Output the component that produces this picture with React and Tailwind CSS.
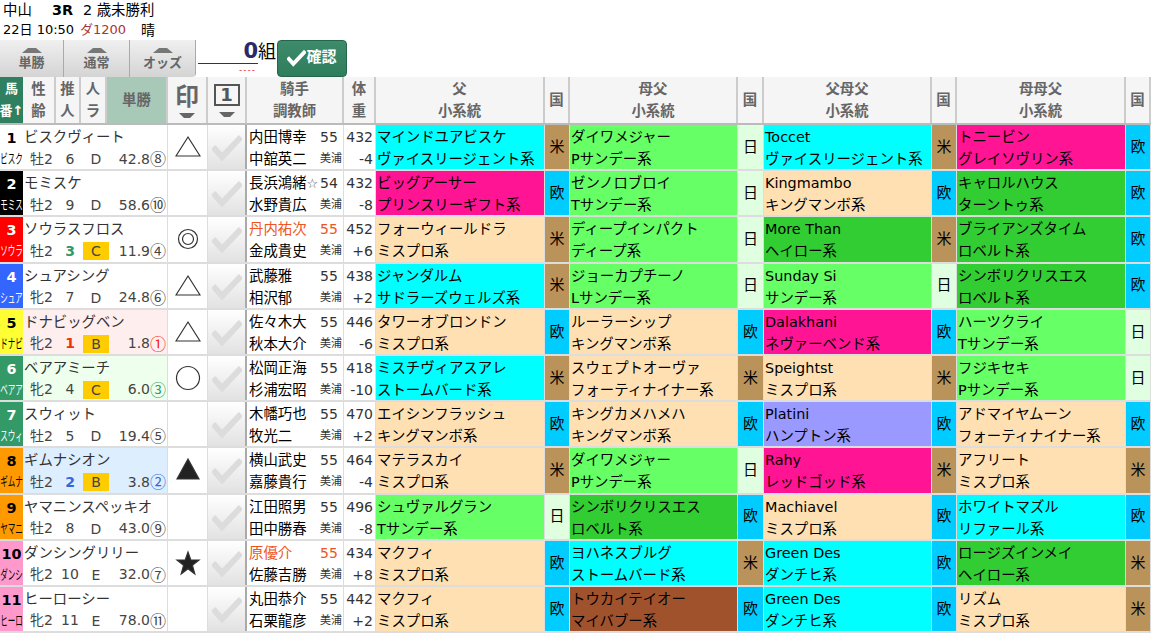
import React from "react";

const pedBg = {
  cyan: "bg-[#00ffff]",
  pink: "bg-[#ff1493]",
  green: "bg-[#66ff66]",
  dark: "bg-[#32cd32]",
  wheat: "bg-[#ffe0b2]",
  purple: "bg-[#9999ff]",
  brown: "bg-[#a0522d]",
};

const countryBg = {
  米: "bg-[#b99359]",
  欧: "bg-[#00ccff]",
  日: "bg-[#e0ffe0]",
};

const waku = {
  1: "bg-white text-black",
  2: "bg-black text-white",
  3: "bg-[#ff0000] text-white",
  4: "bg-[#3366ff] text-white",
  5: "bg-[#ffff33] text-black",
  6: "bg-[#339966] text-white",
  7: "bg-[#339966] text-white",
  8: "bg-[#ff9900] text-black",
  9: "bg-[#ff9900] text-black",
  10: "bg-[#ff99cc] text-black",
  11: "bg-[#ff99cc] text-black",
};

const rows = [
  { no: 1, name: "ビスクヴィート", short: "ビスク", sex: "牡2", pop: "6", rank: "D", odds: "42.8", ord: "⑧", mark: "tri", jockey: "内田博幸", kg: "55", trainer: "中舘英二", bw: "432", diff: "-4",
    ped: [["マインドユアビスケ", "ヴァイスリージェント系", "cyan", "米"], ["ダイワメジャー", "Pサンデー系", "green", "日"], ["Toccet", "ヴァイスリージェント系", "cyan", "米"], ["トニービン", "グレイソヴリン系", "pink", "欧"]] },
  { no: 2, name: "モミスケ", short: "モミス", sex: "牡2", pop: "9", rank: "D", odds: "58.6", ord: "⑩", jockey: "長浜鴻緒", star: true, kg: "54", trainer: "水野貴広", bw: "432", diff: "-8",
    ped: [["ビッグアーサー", "プリンスリーギフト系", "pink", "欧"], ["ゼンノロブロイ", "Tサンデー系", "green", "日"], ["Kingmambo", "キングマンボ系", "wheat", "欧"], ["キャロルハウス", "ターントゥ系", "dark", "欧"]] },
  { no: 3, name: "ソウラスフロス", short: "ソウラ", sex: "牡2", pop: "3", popCls: "font-bold text-[#339966]", rank: "C", odds: "11.9", ord: "④", mark: "double", jockey: "丹内祐次", hot: true, kg: "55", trainer: "金成貴史", bw: "452", diff: "+6",
    ped: [["フォーウィールドラ", "ミスプロ系", "wheat", "米"], ["ディープインパクト", "ディープ系", "green", "日"], ["More Than", "ヘイロー系", "dark", "米"], ["ブライアンズタイム", "ロベルト系", "dark", "欧"]] },
  { no: 4, name: "シュアシング", short: "シュア", sex: "牝2", pop: "7", rank: "D", odds: "24.8", ord: "⑥", mark: "tri", jockey: "武藤雅", kg: "55", trainer: "相沢郁", bw: "438", diff: "+2",
    ped: [["ジャンダルム", "サドラーズウェルズ系", "cyan", "米"], ["ジョーカプチーノ", "Lサンデー系", "green", "日"], ["Sunday Si", "サンデー系", "green", "日"], ["シンボリクリスエス", "ロベルト系", "dark", "欧"]] },
  { no: 5, name: "ドナビッグベン", short: "ドナビ", sex: "牝2", pop: "1", popCls: "font-bold text-[#ee3311]", rank: "B", odds: "1.8", ord: "①", ordCls: "text-[#ee2211]", rowBg: "bg-[#ffeeee]", mark: "tri", jockey: "佐々木大", kg: "55", trainer: "秋本大介", bw: "446", diff: "-6",
    ped: [["タワーオブロンドン", "ミスプロ系", "wheat", "欧"], ["ルーラーシップ", "キングマンボ系", "wheat", "欧"], ["Dalakhani", "ネヴァーベンド系", "pink", "欧"], ["ハーツクライ", "Tサンデー系", "green", "日"]] },
  { no: 6, name: "ベアアミーチ", short: "ベアア", sex: "牝2", pop: "4", rank: "C", odds: "6.0", ord: "③", ordCls: "text-[#339966]", rowBg: "bg-[#eeffee]", mark: "circle", jockey: "松岡正海", kg: "55", trainer: "杉浦宏昭", bw: "418", diff: "-10",
    ped: [["ミスチヴィアスアレ", "ストームバード系", "cyan", "米"], ["スウェプトオーヴァ", "フォーティナイナー系", "wheat", "米"], ["Speightst", "ミスプロ系", "wheat", "米"], ["フジキセキ", "Pサンデー系", "green", "日"]] },
  { no: 7, name: "スウィット", short: "スウィ", sex: "牡2", pop: "5", rank: "D", odds: "19.4", ord: "⑤", jockey: "木幡巧也", kg: "55", trainer: "牧光二", bw: "470", diff: "+2",
    ped: [["エイシンフラッシュ", "キングマンボ系", "wheat", "欧"], ["キングカメハメハ", "キングマンボ系", "wheat", "欧"], ["Platini", "ハンプトン系", "purple", "欧"], ["アドマイヤムーン", "フォーティナイナー系", "wheat", "欧"]] },
  { no: 8, name: "ギムナシオン", short: "ギムナ", sex: "牡2", pop: "2", popCls: "font-bold text-[#3366dd]", rank: "B", odds: "3.8", ord: "②", ordCls: "text-[#3366dd]", rowBg: "bg-[#ddeeff]", mark: "solid", jockey: "横山武史", kg: "55", trainer: "嘉藤貴行", bw: "464", diff: "-4",
    ped: [["マテラスカイ", "ミスプロ系", "wheat", "米"], ["ダイワメジャー", "Pサンデー系", "green", "日"], ["Rahy", "レッドゴッド系", "pink", "米"], ["アフリート", "ミスプロ系", "wheat", "米"]] },
  { no: 9, name: "ヤマニンスペッキオ", short: "ヤマニ", sex: "牡2", pop: "8", rank: "D", odds: "43.0", ord: "⑨", jockey: "江田照男", kg: "55", trainer: "田中勝春", bw: "496", diff: "-8",
    ped: [["シュヴァルグラン", "Tサンデー系", "green", "日"], ["シンボリクリスエス", "ロベルト系", "dark", "欧"], ["Machiavel", "ミスプロ系", "wheat", "欧"], ["ホワイトマズル", "リファール系", "cyan", "欧"]] },
  { no: 10, name: "ダンシングリリー", short: "ダンシ", sex: "牝2", pop: "10", rank: "E", odds: "32.0", ord: "⑦", mark: "star", jockey: "原優介", hot: true, kg: "55", trainer: "佐藤吉勝", bw: "434", diff: "+8",
    ped: [["マクフィ", "ミスプロ系", "wheat", "欧"], ["ヨハネスブルグ", "ストームバード系", "cyan", "米"], ["Green Des", "ダンチヒ系", "cyan", "欧"], ["ロージズインメイ", "ヘイロー系", "dark", "米"]] },
  { no: 11, name: "ヒーローシー", short: "ヒーロ", sex: "牝2", pop: "11", rank: "E", odds: "78.0", ord: "⑪", jockey: "丸田恭介", kg: "55", trainer: "石栗龍彦", bw: "442", diff: "+2",
    ped: [["マクフィ", "ミスプロ系", "wheat", "欧"], ["トウカイテイオー", "マイバブー系", "brown", "欧"], ["Green Des", "ダンチヒ系", "cyan", "欧"], ["リズム", "ミスプロ系", "wheat", "米"]] },
];

const Mark = ({ type }) => {
  if (!type) return null;
  return (
    <svg width="26" height="26" viewBox="0 0 26 26" fill="none" stroke="#333" strokeWidth="1.2">
      {type === "tri" && <polygon points="13,3 25,22 1,22" />}
      {type === "double" && (
        <>
          <circle cx="13" cy="13" r="9.5" />
          <circle cx="13" cy="13" r="5.5" />
        </>
      )}
      {type === "circle" && <circle cx="13" cy="13" r="11.5" />}
      {type === "solid" && <polygon points="13,2 24,22 2,22" fill="#222" />}
      {type === "star" && (
        <polygon points="13,2 15.8,10 24,10 17.4,15.2 19.8,24 13,18.8 6.2,24 8.6,15.2 2,10 10.2,10" fill="#222" />
      )}
    </svg>
  );
};

const SmallArrow = () => (
  <svg width="20" height="5" viewBox="0 0 20 5" className="block">
    <polygon points="6,0 14,0 20,5 0,5" fill="#777" />
  </svg>
);

const DownArrow = () => (
  <svg width="16" height="5" viewBox="0 0 16 5" className="block">
    <polygon points="0,0 16,0 11,5 5,5" fill="#666" />
  </svg>
);

const Check = ({ color = "#dcdcdc", size = 30, width = 6 }) => (
  <svg width={size} height={size} viewBox="0 0 30 30" fill="none">
    <polyline points="1,15 10,25 29,5" stroke={color} strokeWidth={width} />
  </svg>
);

const ToolButton = ({ label, cls }) => (
  <div className={`flex flex-col items-center justify-end pb-[5px] bg-gradient-to-b from-[#f0f0f0] to-[#d4d4d4] border-r border-[#aaa] text-[13px] font-bold text-[#666] ${cls}`}>
    <SmallArrow />
    <span className="leading-[18px] mt-[1px]">{label}</span>
  </div>
);

const headCell = "flex flex-col items-center justify-center border-r-2 border-[#ccc] bg-[#f5f5f5] text-[14.4px] font-bold text-[#666] leading-[22px]";

const Header = () => (
  <div className="grid grid-cols-[23px_33px_25px_26px_61px_40px_39px_97px_32px_169px_25px_168px_26px_168px_25px_169px_25px] h-[48px] border-b-2 border-[#bbb]">
    <div className="flex flex-col items-center justify-center bg-[#2e8060] text-white text-[13px] font-bold leading-[22px] overflow-hidden">
      <span>馬</span>
      <span className="whitespace-nowrap">番↑</span>
    </div>
    <div className={headCell}><span>性</span><span>齢</span></div>
    <div className={headCell}><span>推</span><span>人</span></div>
    <div className={headCell}><span>人</span><span>ラ</span></div>
    <div className={`${headCell} !bg-[#a8c8b8]`}>単勝</div>
    <div className={headCell}>
      <span className="text-[24px] leading-[28px] font-bold">印</span>
      <span className="mt-[2px]"><DownArrow /></span>
    </div>
    <div className={headCell}>
      <span className="w-[26px] h-[22px] border-2 border-[#555] flex items-center justify-center text-[18px] leading-none text-[#555]">1</span>
      <span className="mt-[6px]"><DownArrow /></span>
    </div>
    <div className={headCell}><span>騎手</span><span>調教師</span></div>
    <div className={headCell}><span>体</span><span>重</span></div>
    {["父", "母父", "父母父", "母母父"].map((t) => (
      <React.Fragment key={t}>
        <div className={headCell}><span>{t}</span><span>小系統</span></div>
        <div className={headCell}>国</div>
      </React.Fragment>
    ))}
  </div>
);

const Row = ({ r }) => (
  <div className="grid grid-cols-[23px_145px_40px_39px_97px_32px_169px_25px_168px_26px_168px_25px_169px_25px] grid-rows-[44.2px] h-[46.2px] border-b-2 border-[#ddd] text-[14.4px] text-black">
    <div className={`flex flex-col items-center overflow-hidden pt-[3px] ${waku[r.no]}`}>
      <span className="text-[14.4px] leading-[20px] font-bold">{r.no}</span>
      <span className="text-[13px] leading-[18px] mt-[2px] whitespace-nowrap scale-x-[0.58]">{r.short}</span>
    </div>
    <div className={`flex flex-col pt-[1px] border-r border-[#ddd] ${r.rowBg || "bg-white"}`}>
      <div className="shrink-0 h-[22px] leading-[22px] pl-[1px] text-[#333] whitespace-nowrap">{r.name}</div>
      <div className="shrink-0 grid grid-cols-[7px_27px_26px_26px_1fr] items-center h-[22px] text-[14px] text-[#444]">
        <span />
        <span className="whitespace-nowrap">{r.sex}</span>
        <span className={`text-center ${r.popCls || ""}`}>{r.pop}</span>
        <span className={`text-center leading-[18px] h-[18px] ${r.rank === "B" || r.rank === "C" ? "bg-[#ffcc00]" : ""}`}>{r.rank}</span>
        <span className="flex justify-end items-center whitespace-nowrap pr-[1px]">
          {r.odds}
          <span className={`text-[16px] leading-[16px] -mt-[2px] font-['Noto_Sans_CJK_JP',sans-serif] ${r.ordCls || ""}`}>{r.ord}</span>
        </span>
      </div>
    </div>
    <div className="flex items-center justify-center bg-white border-r border-[#ddd]">
      <Mark type={r.mark} />
    </div>
    <div className="flex items-center justify-center bg-gradient-to-b from-white to-[#e2e2e2] border-r-2 border-[#aaa]">
      <Check />
    </div>
    <div className="flex flex-col pt-[1px] bg-white pl-[2px] border-r border-[#ddd]">
      <div className="shrink-0 grid grid-cols-[71px_1fr] h-[22px] leading-[22px]">
        <span className={`whitespace-nowrap ${r.hot ? "text-[#ee5522]" : ""}`}>
          {r.jockey}
          {r.star && <span className="text-[13px] text-[#555]">☆</span>}
        </span>
        <span className={`text-[14px] ${r.hot ? "text-[#ee5522]" : "text-[#333]"}`}>{r.kg}</span>
      </div>
      <div className="shrink-0 grid grid-cols-[71px_1fr] h-[22px] leading-[22px]">
        <span className="whitespace-nowrap">{r.trainer}</span>
        <span className="text-[11px] whitespace-nowrap text-[#333]">美浦</span>
      </div>
    </div>
    <div className="flex flex-col items-end pt-[1px] bg-white pr-[2px] border-r border-[#ddd] text-[14px] leading-[22px] text-[#333]">
      <span className="shrink-0">{r.bw}</span>
      <span className="shrink-0">{r.diff}</span>
    </div>
    {r.ped.map(([a, b, c, k], i) => (
      <React.Fragment key={i}>
        <div className={`flex flex-col pt-[1px] pl-[1px] leading-[22px] border-r border-[#ddd] whitespace-nowrap ${pedBg[c]}`}>
          <span className="shrink-0">{a}</span>
          <span className="shrink-0">{b}</span>
        </div>
        <div className={`flex items-center justify-center text-[15px] border-r border-[#ddd] ${countryBg[k]}`}>{k}</div>
      </React.Fragment>
    ))}
  </div>
);

export default function App() {
  return (
    <div className="w-[1151px] h-[635px] overflow-hidden bg-white font-['DejaVu_Sans','Noto_Sans_CJK_JP',sans-serif]">
      <div className="h-[40px] pl-[3px] pt-[1px] text-black">
        <div className="flex items-center h-[20px] text-[14.4px]">
          <span className="w-[49px]">中山</span>
          <span className="w-[31px] font-bold">3R</span>
          <span className="whitespace-pre">2 歳未勝利</span>
        </div>
        <div className="flex items-center h-[18px] text-[13px]">
          <span className="w-[77px]">22日 10:50</span>
          <span className="w-[61px] text-[#a33]">ダ1200</span>
          <span className="text-[14px]">晴</span>
        </div>
      </div>
      <div className="flex h-[37px]">
        <div className="flex w-[196px] rounded-br-[4px] overflow-hidden">
          <ToolButton label="単勝" cls="w-[64px]" />
          <ToolButton label="通常" cls="w-[66px]" />
          <ToolButton label="オッズ" cls="w-[66px]" />
        </div>
        <div className="ml-[2px] w-[60px] flex flex-col items-end">
          <span className="w-full h-[24px] border-b border-[#334] text-right text-[21px] leading-[23px] font-bold text-[#2a2a6a]">0</span>
          <span className="mt-[1px] text-[9px] leading-[10px] text-[#e33] tracking-[1px] pr-[2px]">----</span>
        </div>
        <span className="w-[19px] text-[18px] leading-[24px] text-black">組</span>
        <button className="flex items-center justify-center w-[70px] h-[37px] pb-[3px] rounded-[4px] border border-[#25664b] bg-gradient-to-b from-[#3d8b6b] to-[#2e7d5b] text-white text-[15px] font-bold">
          <Check color="#ffffff" size={19} width={6} />
          <span>確認</span>
        </button>
      </div>
      <Header />
      {rows.map((r) => (
        <Row key={r.no} r={r} />
      ))}
    </div>
  );
}
